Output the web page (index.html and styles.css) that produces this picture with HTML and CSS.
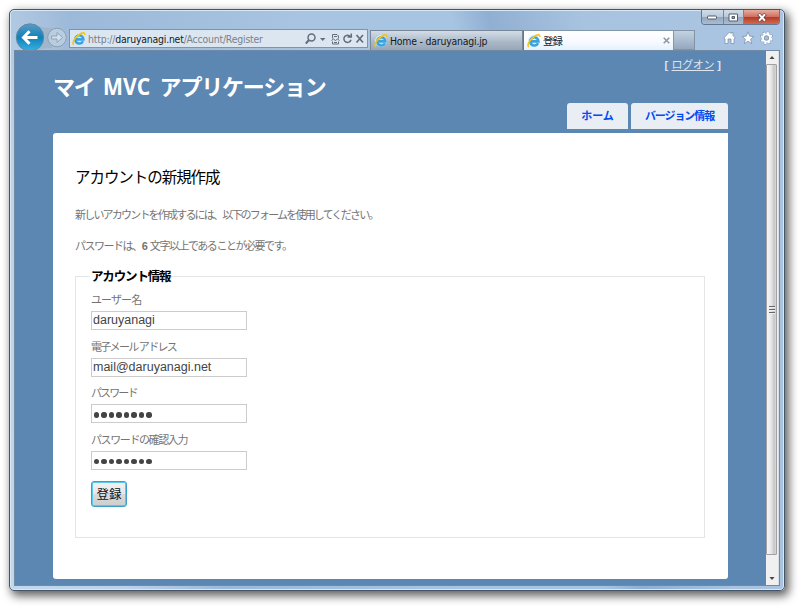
FILE: index.html
```html
<!DOCTYPE html>
<html lang="ja">
<head>
<meta charset="utf-8">
<title>登録</title>
<link rel="stylesheet" href="styles.css">
</head>
<body>
<svg class="defs" width="0" height="0">
  <defs>
    <linearGradient id="back" x1="0" y1="0" x2="0" y2="1"><stop offset="0" stop-color="#5a9cc4"/><stop offset=".5" stop-color="#1180b8"/><stop offset="1" stop-color="#35b5e4"/></linearGradient>
    <symbol id="ie" viewBox="0 0 14 14">
      <path d="M10.900 8.600A4.200 4.200 0 1 1 11.200 7.200H4.200" fill="none" stroke="#d8ecf8" stroke-width="3.600"/>
      <path d="M11 9.200A4.100 4.100 0 1 1 11.400 7.400H4" fill="none" stroke="#3ca3df" stroke-width="2.600"/>
      <path d="M1.800 12.800C-.2 11.500 2 6.600 6 3.500S13-.2 12.900 3" fill="none" stroke="#f3c51c" stroke-width="1.600"/>
    </symbol>
  </defs>
</svg>
<div class="window">
  <header class="chrome">
    <svg class="nav" width="54" height="30" viewBox="0 0 54 30">
      <path d="M23 3Q30 5 37 5V25Q28 25 23 27Z" fill="#9fb6cc"/>
      <circle cx="15" cy="14.500" r="13.700" fill="url(#back)" stroke="#5b88a8"/>
      <path d="M22.500 14.500H9M14.500 8.300L8.500 14.500L14.500 20.700" fill="none" stroke="#fff" stroke-width="3"/>
      <circle cx="42" cy="14.500" r="9.300" fill="#b9cde0" stroke="#8c9fb3"/>
      <path d="M36.500 13H42V9.500L47.500 14.500L42 19.500V16H36.500Z" fill="#d3e0ed" stroke="#8fa3b8"/>
    </svg>
    <div class="address">
      <svg width="14" height="14"><use href="#ie"/></svg>
      <span class="url">http://<b>daruyanagi.net</b>/Account/Register</span>
      <svg class="tools" width="60" height="14" viewBox="0 0 60 14" fill="none" stroke="#626e7d" stroke-width="1.500">
        <circle cx="7.500" cy="5.500" r="3.500"/><path d="M5 8L1.800 11.500" stroke-width="2"/>
        <path d="M16 6H21.500L18.700 9Z" fill="#626e7d" stroke="none"/>
        <path d="M28.500 6.500V2.500H33L34.500 4V6.500M27.500 8.500L29.500 7L31.500 8.500L33.500 7L35.500 8.500M28.500 9.500V12H34.500V9.500M30 4.500H33M30 10.500H33" stroke-width="1"/>
        <path d="M46.300 4.500A3.600 3.600 0 1 0 47 7.700M43.500 5H47.300V1.500"/>
        <path d="M52.500 3L59 10.500M59 3L52.500 10.500" stroke-width="1.700"/>
      </svg>
    </div>
    <nav class="tabs">
      <div class="tab"><svg width="14" height="14"><use href="#ie"/></svg><span>Home - daruyanagi.jp</span></div>
      <div class="tab active"><svg width="14" height="14"><use href="#ie"/></svg><span>登録</span><svg class="close" width="7" height="7"><path d="M.7 .7L6.300 6.300M6.300 .7L.7 6.300" stroke="#8e959c" stroke-width="1.500"/></svg></div>
      <div class="newtab"></div>
    </nav>
    <div class="right">
      <div class="controls">
        <span><svg width="10" height="5"><rect x=".5" y="1" width="9" height="3" rx="1" fill="#fff" stroke="#515b69"/></svg></span>
        <span><svg width="11" height="9"><path fill-rule="evenodd" d="M1 1H9.500V8H1ZM4 3.500V5.500H6.500V3.500Z" fill="#fff" stroke="#515b69"/></svg></span>
        <span class="exit"><svg width="10" height="9"><path d="M1.500 1L8.500 8M8.500 1L1.500 8" stroke="#6d3c3c" stroke-width="3.500"/><path d="M2 1.300L8 7.700M8 1.300L2 7.700" stroke="#fff" stroke-width="2"/></svg></span>
      </div>
      <svg class="commands" width="51" height="14" viewBox="0 0 51 14" fill="#fff" stroke="#7d93ab" stroke-width=".8">
        <path d="M.7 7L6.500 1L8 2.500V1.500H10V4.500L12.300 7L11 8V12.500H8V8H5V12.500H2V8Z"/>
        <path d="M25 .8L26.700 5.200L31 5.400L27.600 8.200L28.800 12.700L25 10.200L21.200 12.700L22.400 8.200L19 5.400L23.300 5.200Z"/>
        <circle cx="43.500" cy="7" r="5.300" fill="none" stroke="#7d93ab" stroke-width="2.600" stroke-dasharray="2.300 1.860"/>
        <circle cx="43.500" cy="7" r="5.100" fill="none" stroke="#fff" stroke-width="1.800" stroke-dasharray="2.100 1.900"/>
        <circle cx="43.500" cy="7" r="3.500" fill="none" stroke="#fff" stroke-width="2"/><circle cx="43.500" cy="7" r="2.200" fill="#a6bed7"/>
      </svg>
    </div>
  </header>
  <div class="viewport">
    <div class="page">
      <div class="logon"><b>[</b> <a>ログオン</a> <b>]</b></div>
      <h1>マイ<span>MVC</span>アプリケーション</h1>
      <nav class="menu"><a class="home">ホーム</a><a class="about">バージョン情報</a></nav>
      <main>
        <h2>アカウントの新規作成</h2>
        <p class="intro">新しいアカウントを作成するには、以下のフォームを使用してください。</p>
        <p class="rule">パスワードは、<span>6</span> 文字以上であることが必要です。</p>
        <form class="panel">
          <div class="legend">アカウント情報</div>
          <label class="l1">ユーザー名</label>
          <div class="input">daruyanagi</div>
          <label class="l2">電子メール アドレス</label>
          <div class="input">mail@daruyanagi.net</div>
          <label class="l3">パスワード</label>
          <div class="input dots"><i></i><i></i><i></i><i></i><i></i><i></i><i></i><i></i></div>
          <label class="l4">パスワードの確認入力</label>
          <div class="input dots"><i></i><i></i><i></i><i></i><i></i><i></i><i></i><i></i></div>
          <button type="button">登録</button>
        </form>
      </main>
    </div>
    <div class="scroll">
      <svg width="12" height="13"><path d="M3.500 8L6 5L8.500 8Z" fill="#444"/></svg>
      <div class="thumb"><i></i><i></i><i></i></div>
      <svg width="12" height="30"><path d="M3.500 22H8.500L6 25Z" fill="#444"/></svg>
    </div>
  </div>
</div>
</body>
</html>
```
FILE: styles.css
```css
* { box-sizing: border-box; }
body { margin: 0; padding: 9px; height: 606px; overflow: hidden; background: #fff; font-family: "Liberation Sans", "Noto Sans CJK JP", sans-serif; }
.defs { position: absolute; }
svg { display: block; flex: none; }
.window {
  width: 776px; height: 582px; padding: 0 4px 4px;
  border: 1px solid #455466; border-radius: 5px;
  background: linear-gradient(75deg, #c3d7ec 0, #bdd1e7 13%, #9db9d9 23%, #a8c4e2 48%, #a7c4e2 64%, #91afd2 68%, #a7c3e0 78%, #a9c5e3 100%);
  box-shadow: inset 0 0 0 1px #d7e9f8, 3px 4px 10px 1px rgba(0,0,0,.62);
}
.chrome { height: 40px; display: flex; align-items: flex-end; overflow: hidden; }
.nav { margin: 0 1px -3px 1px; }
.address { display: flex; align-items: center; width: 299px; height: 19px; margin: 0 0 2px -1px; padding: 0 3px 0 2px; border: 1px solid #8393a5; background: #dce6f1; }
.url { flex: 1; margin-left: 2px; font: 10.400px "DejaVu Sans Condensed", "DejaVu Sans", sans-serif; font-stretch: condensed; letter-spacing: -.2px; color: #79818a; white-space: nowrap; }
.url b { color: #15191e; font-weight: 400; }
.tabs { display: flex; align-items: flex-end; margin-left: 2px; height: 21px; }
.tab { display: flex; align-items: center; width: 153px; height: 20px; padding: 0 3px; gap: 2px; border: 1px solid #788797; border-bottom: 0; background: linear-gradient(#d3dde8, #a9b7c5 60%, #98a7b8); font: 10.400px "DejaVu Sans Condensed", "DejaVu Sans", "Noto Sans CJK JP", sans-serif; font-stretch: condensed; letter-spacing: -.2px; color: #16191e; white-space: nowrap; }
.tab.active { width: 151px; background: linear-gradient(#fff, #f6faff 60%, #e5f0fc); border-color: #8497aa; border-left-color: #667687; letter-spacing: -.8px; }
.close { margin-left: auto; }
.newtab { width: 21px; height: 20px; border: 1px solid #8494a6; border-left: 0; background: linear-gradient(#c3d2e1, #94a8bd); }
.right { align-self: stretch; margin-left: auto; display: flex; flex-direction: column; align-items: flex-end; }
.controls { display: flex; width: 79px; height: 15px; border: 1px solid #647991; border-top: 0; border-radius: 0 0 4px 4px; overflow: hidden; }
.controls span { display: flex; align-items: center; justify-content: center; width: 21px; background: linear-gradient(#d0dce9, #bac9da 48%, #91a6be 50%, #a9bdd2); }
.controls span + span { border-left: 1px solid #73869c; }
.controls .exit { width: 36px; background: linear-gradient(#e6ada2, #d17060 48%, #b63724 50%, #cf6c50); }
.commands { margin: 6px 6px 0 0; }
.viewport { display: flex; height: 536px; border: 1px solid #718aa4; background: #5c87b2; }
.page { flex: 1; padding: 0 38px; display: flex; flex-direction: column; }
.logon { height: 17px; margin: 6px 7px 0 0; text-align: right; font-size: 12px; line-height: 17px; color: #dce6f0; white-space: nowrap; }
.logon b { font-size: 11px; }
.logon a { text-decoration: underline; font-size: 11px; letter-spacing: -.4px; }
h1 { margin: -4px 0 3px; height: 30px; font: bold 22px/30px "Noto Sans CJK JP", sans-serif; color: #fff; letter-spacing: -1.200px; white-space: nowrap; }
h1 span { display: inline-block; margin: 0 10px 0 8px; font: bold 23px/28px "Open Sans", sans-serif; letter-spacing: 0; transform: scaleX(.92); transform-origin: left; width: 47px; }
.menu { display: flex; justify-content: flex-end; gap: 3px; height: 26px; }
.menu a { display: flex; align-items: center; justify-content: center; height: 26px; padding-bottom: 2px; border-radius: 3px 3px 0 0; background: #e8eef4; color: #034af3; font-size: 11px; font-weight: bold; white-space: nowrap; }
.home { width: 61px; }
.about { width: 97px; letter-spacing: -1.100px; }
main { height: 446px; margin-top: 4px; padding: 31px 23px 0 22px; border-radius: 3px 0 3px 3px; background: #fff; color: #747474; white-space: nowrap; }
h2 { margin: 0 0 16px; font-weight: 400; font-size: 15.500px; line-height: 27px; letter-spacing: -1.050px; color: #000; }
p { margin: 0 0 15px; font-size: 11px; line-height: 16px; }
.intro { letter-spacing: -1.800px; }
.rule { letter-spacing: -1.480px; }
.rule span { margin-right: 2px; font-weight: bold; }
.panel { height: 262px; padding: 0 14px 0 15px; border: 1px solid #e5e5e5; margin-top: 22px; }
.legend { width: max-content; height: 18px; margin: -9px 0 5px -1px; padding: 0 1px; line-height: 19px; font-size: 12.500px; font-weight: bold; letter-spacing: -1.150px; color: #000; background: #fff; }
label { display: block; height: 18px; line-height: 18px; font-size: 11px; }
.l1 { letter-spacing: -.9px; }
.l2 { letter-spacing: -1.700px; }
.l3 { letter-spacing: -1.900px; }
.l4 { letter-spacing: -1.400px; }
.input { display: flex; align-items: center; width: 156px; height: 19px; margin: 2px 0 7.600px; padding: 0 1px; border: 1px solid #ccc; font-size: 12.500px; line-height: 17px; color: #444; }
.dots { gap: 2.100px; padding: 3px 2px 0; }
.dots i { width: 5.400px; height: 5.400px; border-radius: 50%; background: #444; }
button { display: block; width: 36px; height: 26px; margin: 11px 0 0; padding: 0; border: 1px solid #3c9fc9; border-radius: 3px; box-shadow: inset 0 0 0 1px #5bc8ec; background: linear-gradient(#f2f2f2, #e8e8e8 48%, #dadada 50%, #cecece); font: 12.500px "Noto Sans CJK JP", sans-serif; color: #111; }
.scroll { width: 13px; padding-right: 1px; display: flex; flex-direction: column; background: #f0f0f0; border-right: 1px solid #d9dee5; }
.thumb { flex: 1; width: 11px; display: flex; flex-direction: column; align-items: center; justify-content: center; gap: 1px; border: 1px solid #a1a1a1; border-radius: 1px; background: linear-gradient(90deg, #f7f7f7, #e8e8e8 45%, #c5c5cb 80%, #dadada); }
.thumb i { width: 6px; height: 2px; border-top: 1px solid #666; background: #eee; }
```
